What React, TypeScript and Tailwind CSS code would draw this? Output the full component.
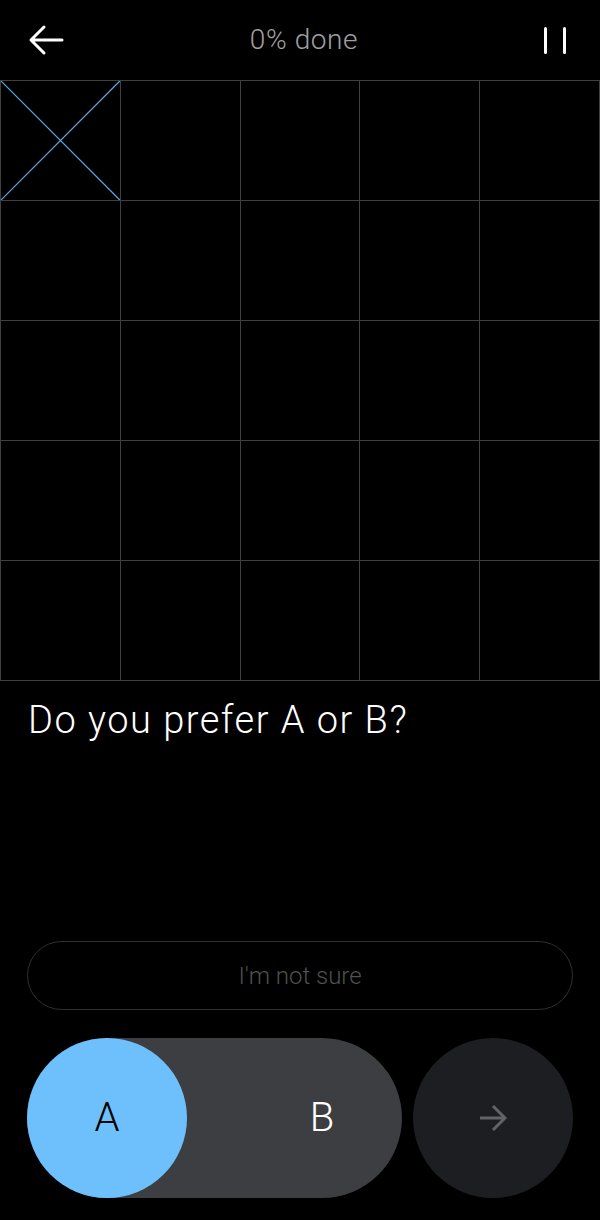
import React from "react";

const cells = Array.from({ length: 25 }, (_, i) => i);

function BackArrow() {
  return (
    <svg width="36" height="32" viewBox="0 0 36 32" fill="none">
      <path
        d="M34 16H4M16 3L3 16l13 13"
        stroke="#fff"
        strokeWidth="3"
        strokeLinecap="round"
        strokeLinejoin="round"
      />
    </svg>
  );
}

function NextArrow() {
  return (
    <svg width="28" height="28" viewBox="0 0 28 28" fill="none">
      <path
        d="M1 14h25M14 2l12 12-12 12"
        stroke="#626366"
        strokeWidth="3"
        strokeLinejoin="miter"
      />
    </svg>
  );
}

export default function App() {
  return (
    <div className="flex h-[1220px] w-[600px] flex-col bg-black font-['Roboto',sans-serif] font-light text-white">
      <header className="flex h-20 items-center justify-between pl-[28px] pr-[34px]">
        <BackArrow />
        <p className="text-[28px] tracking-[0.6px] text-[#a0a0a0]">0% done</p>
        <div className="flex gap-[16px]">
          <span className="h-[27px] w-[3px] rounded-sm bg-white" />
          <span className="h-[27px] w-[3px] rounded-sm bg-white" />
        </div>
      </header>

      <div className="grid grid-cols-5 gap-px border border-[#404040] bg-[#404040]">
        {cells.map((i) => (
          <div key={i} className="relative h-[119px] bg-black">
            {i === 0 && (
              <svg className="absolute inset-0 h-full w-full" viewBox="0 0 100 100" preserveAspectRatio="none">
                <path d="M0 0L100 100M100 0L0 100" stroke="#5ea9e3" strokeWidth="1.2" vectorEffect="non-scaling-stroke" />
              </svg>
            )}
          </div>
        ))}
      </div>

      <h1 className="mt-[20px] px-[28px] text-[38px] leading-[38px] tracking-[1.5px]">Do you prefer A or B?</h1>

      <div className="flex-1" />

      <div className="flex flex-col gap-[28px] px-[27px] pb-[22px]">
        <button className="flex h-[69px] items-center justify-center rounded-full border border-[#303030] text-[24px] text-[#505050]">
          I&apos;m not sure
        </button>
        <div className="flex gap-[11px]">
          <div className="flex h-[160px] flex-1 items-center justify-between rounded-full bg-[#3d3e42]">
            <div className="flex h-[160px] w-[160px] items-center justify-center rounded-full bg-[#6ec0fc] text-[40px] text-black">
              A
            </div>
            <div className="flex h-[160px] w-[160px] items-center justify-center text-[40px] text-white">B</div>
          </div>
          <button className="flex h-[160px] w-[160px] items-center justify-center rounded-full bg-[#1d1e21]">
            <NextArrow />
          </button>
        </div>
      </div>
    </div>
  );
}
